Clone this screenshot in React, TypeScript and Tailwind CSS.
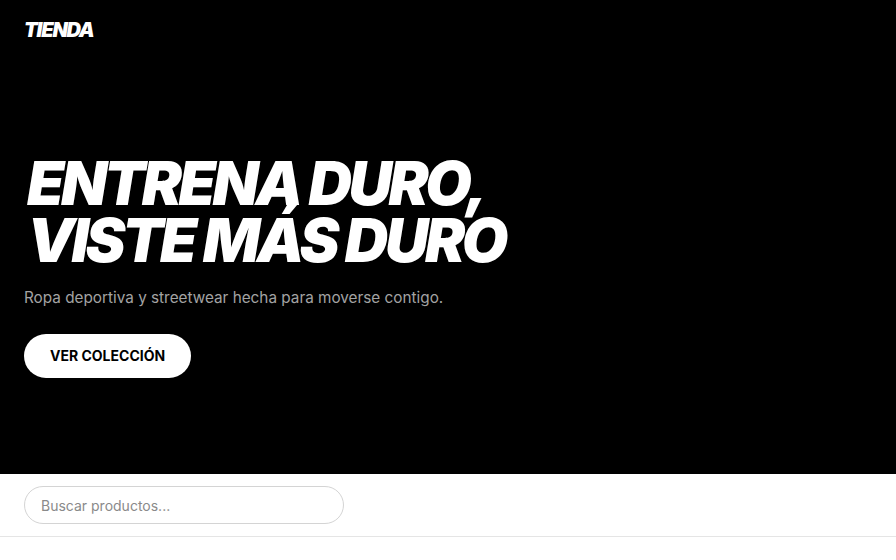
export default function App() {
  return (
    <div className="min-h-screen bg-white" style={{ fontFamily: 'Inter, "Noto Sans", sans-serif' }}>
      <section className="bg-black text-white h-[474px] flex flex-col">
        <header className="px-6 pt-[19px]">
          <span className="text-[20px] font-black italic tracking-[-0.06em] leading-none">TIENDA</span>
        </header>
        <div className="px-6 mt-[112px]">
          <h1 className="text-[60px] font-black italic tracking-[-0.055em] leading-[57px] pl-[3px]">
            ENTRENA DURO,
            <br />
            VISTE MÁS DURO
          </h1>
          <p className="mt-[18px] text-[15.3px] text-[#a3a3a3]">
            Ropa deportiva y streetwear hecha para moverse contigo.
          </p>
          <button className="mt-[24px] h-11 px-[26px] rounded-full bg-white text-black text-[14px] font-bold">
            VER COLECCIÓN
          </button>
        </div>
      </section>
      <div className="px-6 pt-3 pb-3 border-b border-[#e5e5e5]">
        <input
          className="w-[320px] h-[38px] rounded-full border border-[#d4d4d4] px-4 text-[14px] text-black placeholder:text-[#8a8a8a] outline-none"
          placeholder="Buscar productos..."
        />
      </div>
    </div>
  );
}
